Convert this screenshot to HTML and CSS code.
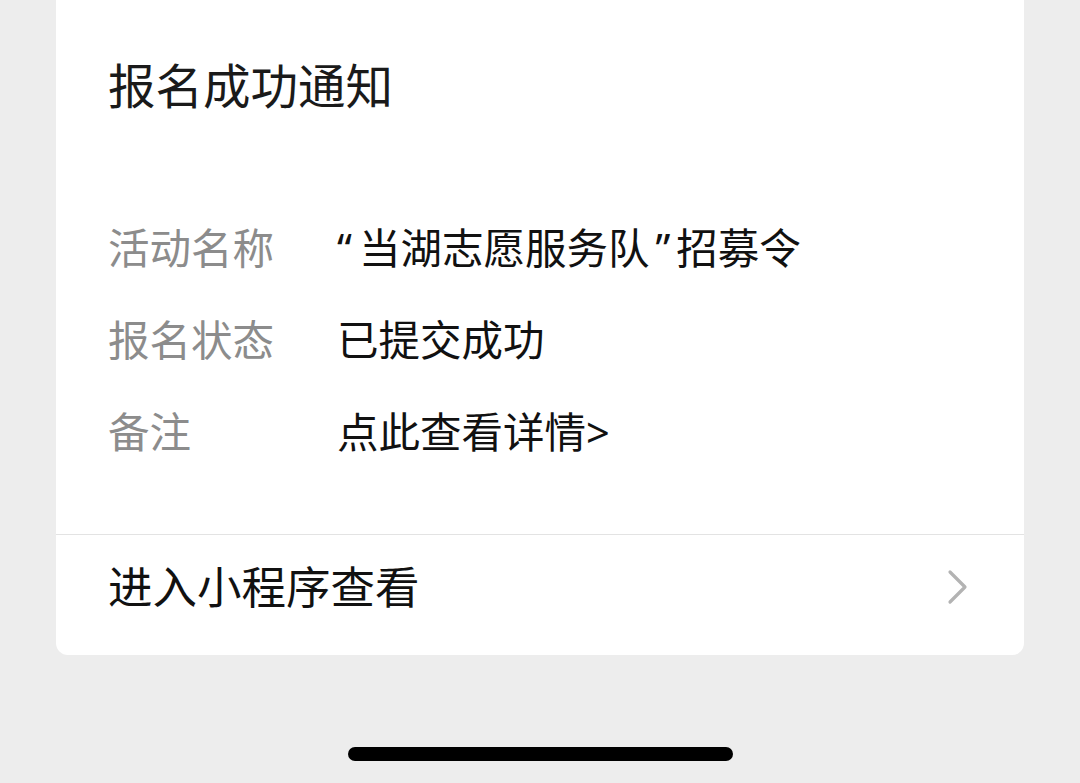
FILE: index.html
```html
<!DOCTYPE html>
<html lang="zh-CN">
<head>
    <meta charset="UTF-8">
    <meta name="viewport" content="width=device-width, initial-scale=1.0">
    <title>报名成功通知</title>
    <link rel="stylesheet" href="styles.css">
</head>
<body>
    <div class="card">
        <div class="card-body">
            <h1 class="title">报名成功通知</h1>
            <div class="fields">
                <div class="field">
                    <span class="label">活动名称</span>
                    <span class="value"><span class="quote-open">“</span>当湖志愿服务队<span class="quote-close">”</span>招募令</span>
                </div>
                <div class="field">
                    <span class="label">报名状态</span>
                    <span class="value">已提交成功</span>
                </div>
                <div class="field">
                    <span class="label">备注</span>
                    <span class="value">点此查看详情&gt;</span>
                </div>
            </div>
        </div>
        <div class="card-link">
            <span>进入小程序查看</span>
            <svg class="chevron" width="22" height="36" viewBox="0 0 22 36">
                <path d="M3 3 L18 18 L3 33" fill="none" stroke="#b3b3b3" stroke-width="3.2" stroke-linecap="round" stroke-linejoin="round"/>
            </svg>
        </div>
    </div>
    <div class="home-bar"></div>
</body>
</html>
```

FILE: styles.css
```css
body {
    margin: 0;
    background-color: #ededed;
    font-family: "Noto Sans", "Noto Sans CJK SC", sans-serif;
    height: 783px;
    overflow: hidden;
}

.card {
    margin-left: 56px;
    width: 968px;
    background-color: #fff;
    border-radius: 0 0 12px 12px;
}

.card-body {
    padding: 56px 52px 58px 52px;
    border-bottom: 1px solid #e3e3e3;
}

.title {
    margin: 0 0 84px 0;
    font-size: 47.5px;
    font-weight: normal;
    line-height: 60px;
    color: #1a1a1a;
}

.field {
    display: flex;
    height: 92px;
    align-items: center;
    font-size: 41.5px;
}

.label {
    width: 229px;
    color: #8c8c8c;
}

.value {
    color: #111;
}

.quote-open {
    margin-right: 7px;
}

.quote-close {
    margin: 0 6px;
}

.card-link {
    display: flex;
    align-items: center;
    justify-content: space-between;
    padding: 22px 55px 38px 52px;
    font-size: 44.5px;
    line-height: 60px;
    color: #111;
}

.chevron {
    display: block;
}

.home-bar {
    width: 385px;
    height: 14px;
    margin: 92px auto 0 auto;
    background-color: #000;
    border-radius: 7px;
}
```
